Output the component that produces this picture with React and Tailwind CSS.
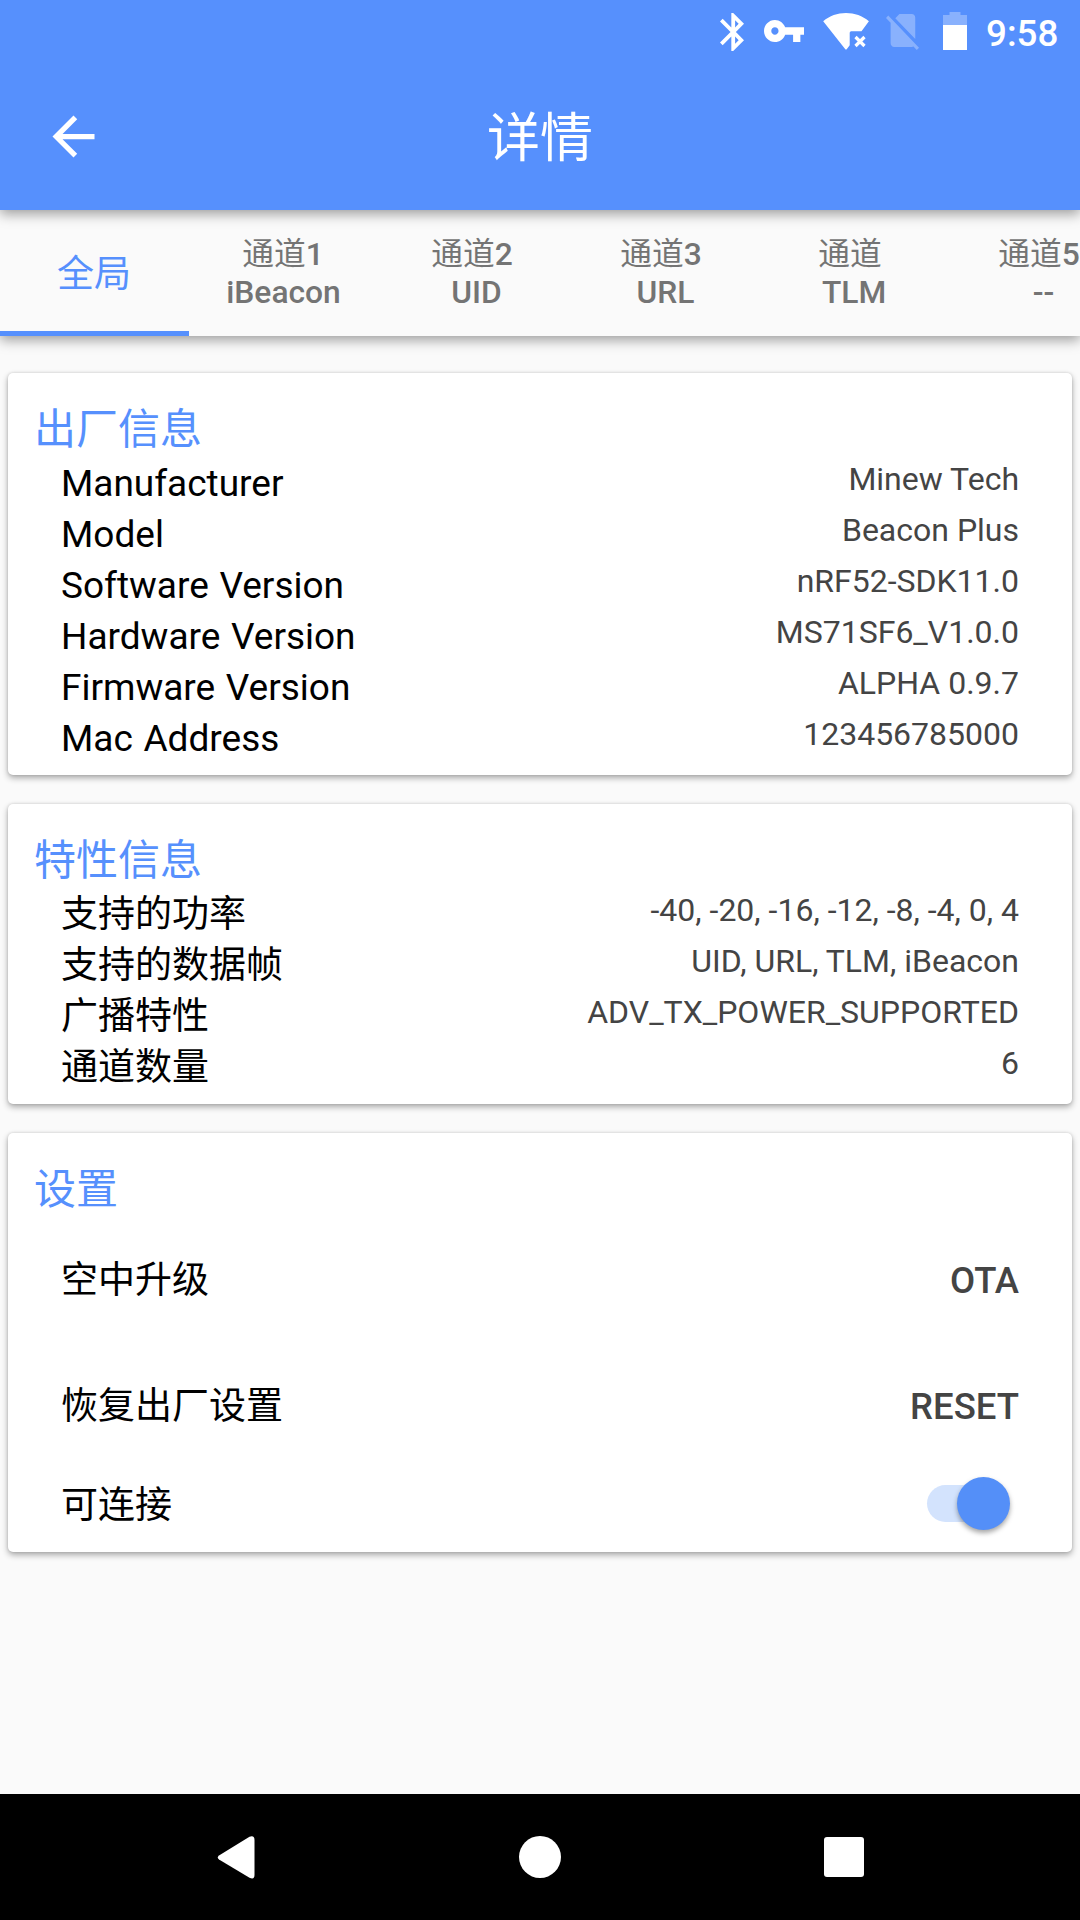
const factoryInfo = [
  ['Manufacturer', 'Minew Tech'],
  ['Model', 'Beacon Plus'],
  ['Software Version', 'nRF52-SDK11.0'],
  ['Hardware Version', 'MS71SF6_V1.0.0'],
  ['Firmware Version', 'ALPHA 0.9.7'],
  ['Mac Address', '123456785000'],
];

const featureInfo = [
  ['支持的功率', '-40, -20, -16, -12, -8, -4, 0, 4'],
  ['支持的数据帧', 'UID, URL, TLM, iBeacon'],
  ['广播特性', 'ADV_TX_POWER_SUPPORTED'],
  ['通道数量', '6'],
];

const channels = [
  ['1', 'iBeacon'],
  ['2', ' UID'],
  ['3', ' URL'],
  ['', ' TLM'],
  ['5', ' --'],
];

function StatusBar() {
  return (
    <div className="flex h-[63px] items-start pl-[720px] text-white">
      <svg className="mt-[13px] h-[38px] w-[24px]" viewBox="5 2 12.71 20" preserveAspectRatio="none" fill="currentColor">
        <path d="M17.71 7.71L12 2h-1v7.59L6.41 5 5 6.41 10.59 12 5 17.59 6.41 19 11 14.41V22h1l5.71-5.71-4.3-4.29 4.3-4.29zM13 5.83l1.88 1.88L13 9.59V5.83zm1.88 10.46L13 18.17v-3.76l1.88 1.88z" />
      </svg>
      <svg className="ml-[20px] mt-[20px] h-[22px] w-[40px]" viewBox="1 6 22 12" preserveAspectRatio="none" fill="currentColor">
        <path d="M12.65 10C11.83 7.67 9.61 6 7 6c-3.31 0-6 2.69-6 6s2.69 6 6 6c2.61 0 4.83-1.67 5.65-4H17v4h4v-4h2v-4H12.65zM7 14c-1.1 0-2-.9-2-2s.9-2 2-2 2 .9 2 2-.9 2-2 2z" />
      </svg>
      <svg className="ml-[16px] mt-[10px] h-[42px] w-[52px]" viewBox="0 0 52 42">
        <path fill="currentColor" d="M3.2 11.2C9.5 5.9 17.5 3 26 3s16.6 2.9 22.9 8.2L41.5 21.3H31.2q-1.5 0-1.5 1.5V35.2L26.9 39q-.9 1-1.8 0z" />
        <path stroke="currentColor" strokeWidth="3.2" d="M35.500 27l9 9M44.500 27l-9 9" />
      </svg>
      <svg className="ml-[14px] mt-[14px] h-[36px] w-[33px] text-white/30" viewBox="2.38 3 18.74 19.62" preserveAspectRatio="none" fill="currentColor">
        <path d="M18.99 5c0-1.1-.89-2-1.99-2h-7L7.66 5.34 19 16.68 18.99 5zM3.65 3.88L2.38 5.15 5 7.77V19c0 1.1.9 2 2 2h10.01c.35 0 .67-.1.96-.26l1.88 1.88 1.27-1.27L3.65 3.88z" />
      </svg>
      <svg className="ml-[24px] mt-[12px] h-[38px] w-[24px]" viewBox="0 0 24 38" fill="currentColor">
        <path fillOpacity=".3" d="M6.500 0h11v3H24v10H0V3h6.500z" />
        <path d="M0 13h24v25H0z" />
      </svg>
      <span className="ml-[19px] mt-[12px] text-[36.75px] font-medium leading-[43px]">9:58</span>
    </div>
  );
}

function Header() {
  return (
    <header className="relative z-20 h-[210px] bg-[#5690fd] shadow-[0_4px_12px_rgba(0,0,0,0.38)]">
      <StatusBar />
      <div className="grid h-[147px] grid-cols-[1fr_auto_1fr] items-center">
        <svg className="ml-[42px] size-[63px] text-white" viewBox="0 0 24 24" fill="currentColor">
          <path d="M20 11H7.830l5.590-5.590L12 4l-8 8 8 8 1.410-1.410L7.830 13H20v-2z" />
        </svg>
        <h1 className="pt-[5px] text-[53px] leading-[62px] text-white">详情</h1>
      </div>
    </header>
  );
}

function Tabs() {
  return (
    <nav className="relative z-10 flex h-[126px] overflow-x-clip bg-[#fafafa] text-center shadow-[0_4px_12px_rgba(0,0,0,0.38)]">
      <div className="flex w-[189px] shrink-0 items-center justify-center border-b-[5px] border-[#5690fd] pt-[8px] pr-[1px] text-[37px] leading-[43px] text-[#5690fd]">
        全局
      </div>
      {channels.map(([number, frame]) => (
        <div
          key={frame}
          className="w-[189px] shrink-0 whitespace-pre pt-[26px] text-[31.75px] font-medium leading-[38px] text-[#747474]"
        >
          <div className="pr-[1px]">
            <span className="font-normal">通道</span>
            {number}
          </div>
          <div>{frame}</div>
        </div>
      ))}
    </nav>
  );
}

function Card({ title, children }) {
  return (
    <section className="rounded-[5px] bg-white px-[26px] pb-[11px] pt-[32px] shadow-[0_3px_6px_rgba(0,0,0,0.32),0_0_3px_rgba(0,0,0,0.14)]">
      <h2 className="mb-[4px] text-[42px] leading-[49px] text-[#5690fd]">{title}</h2>
      <div className="px-[27px] text-[37px] text-black">{children}</div>
    </section>
  );
}

function InfoRows({ rows }) {
  return rows.map(([label, value]) => (
    <div key={label} className="flex h-[51px] items-start justify-between">
      <span className="leading-[51px] [word-spacing:1.5px]">{label}</span>
      <span className="text-[32px] leading-[43px] text-[#444]">{value}</span>
    </div>
  ));
}

function ActionRow({ label, action }) {
  return (
    <div className="flex h-[126px] items-center justify-between pb-[2px] leading-[43px]">
      <span>{label}</span>
      <button className="text-[36.5px] font-medium text-[#444]">{action}</button>
    </div>
  );
}

function Switch() {
  return (
    <div className="mb-[4px] mr-[9px] flex h-[53px] w-[83px] items-center">
      <div className="flex h-[37px] w-[76px] items-center rounded-full bg-[#d3e3fd] pl-[30px]">
        <div className="size-[53px] shrink-0 rounded-full bg-[#548ff8] shadow-[0_3px_5px_rgba(0,0,0,0.35)]" />
      </div>
    </div>
  );
}

function NavigationBar() {
  return (
    <footer className="flex h-[126px] items-center bg-black pl-[217px] text-white">
      <svg className="h-[43px] w-[38px]" viewBox="0 0 38 43" fill="currentColor">
        <path d="M2 19.500L32.500.8Q37.500-1 37.500 4V39Q37.500 44 32.500 41.700L2 23.500Q-.5 21.500 2 19.500z" />
      </svg>
      <div className="ml-[264px] size-[42px] rounded-full bg-white" />
      <div className="ml-[263px] size-[40px] rounded-[3px] bg-white" />
    </footer>
  );
}

export default function App() {
  return (
    <div
      lang="zh-CN"
      className="flex h-[1920px] w-[1080px] flex-col overflow-hidden bg-[#fafafa] font-[Roboto,'Noto_Sans_CJK_SC',sans-serif]"
    >
      <Header />
      <Tabs />
      <main className="flex flex-1 flex-col gap-[29px] px-2 pt-[37px]">
        <Card title="出厂信息">
          <InfoRows rows={factoryInfo} />
        </Card>
        <Card title="特性信息">
          <InfoRows rows={featureInfo} />
        </Card>
        <Card title="设置">
          <ActionRow label="空中升级" action="OTA" />
          <ActionRow label="恢复出厂设置" action="RESET" />
          <div className="flex h-[71px] items-center justify-between leading-[43px]">
            <span>可连接</span>
            <Switch />
          </div>
        </Card>
      </main>
      <NavigationBar />
    </div>
  );
}
